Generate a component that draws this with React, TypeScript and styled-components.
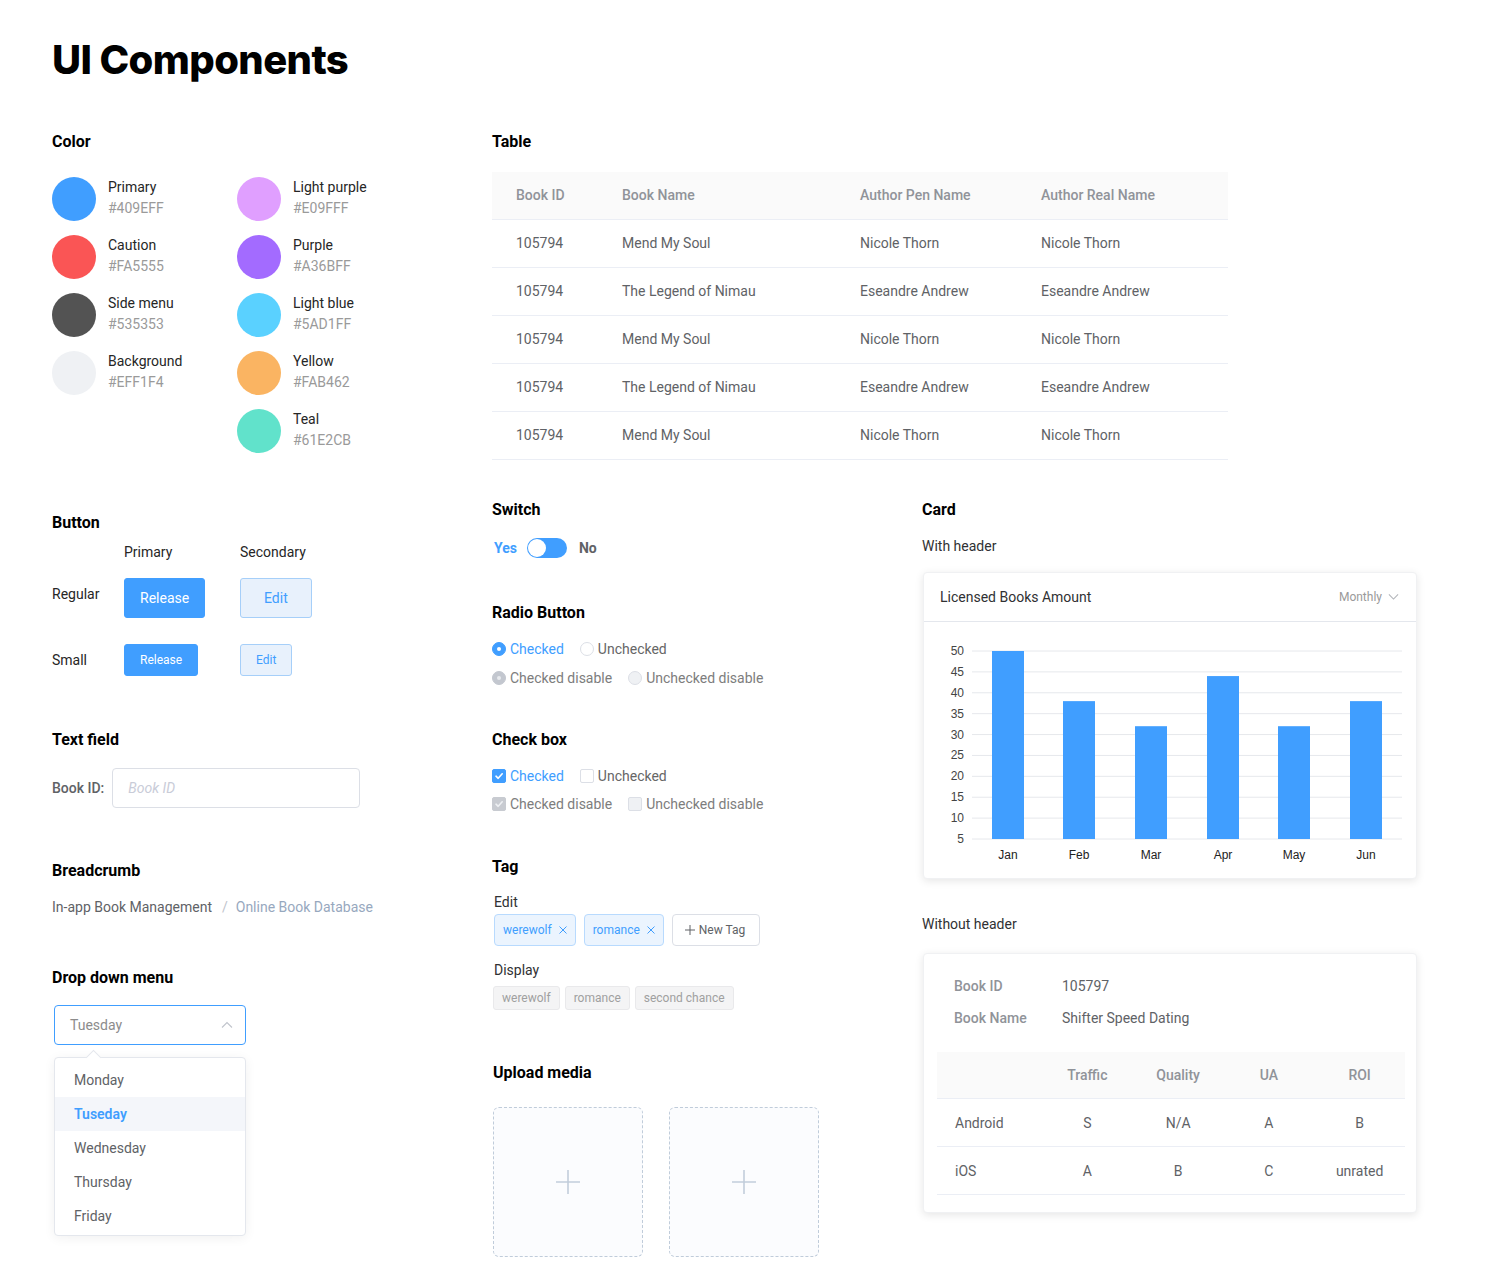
import React from "react";
import styled, { createGlobalStyle, css } from "styled-components";

const GlobalStyle = createGlobalStyle`
  html, body { margin: 0; padding: 0; background: #fff; }
  body { font-family: Roboto, "Liberation Sans", Arial, sans-serif; color: #303133; }
  * { box-sizing: border-box; }
`;

const BLUE = "#409EFF";

const Page = styled.div`
  width: 1500px;
  min-height: 1279px;
  padding: 36px 0 0 52px;
`;

const Title = styled.h1`
  margin: 0;
  font-family: Inter, "Liberation Sans", sans-serif;
  font-weight: 800;
  font-size: 40px;
  line-height: 48px;
  letter-spacing: -0.6px;
  color: #000;
`;

const Layout = styled.div`
  margin-top: 47px;
  display: grid;
  grid-template-columns: 440px 430px 495px;
  grid-template-rows: auto auto;
  row-gap: 39px;
`;

const LeftColumn = styled.div`
  grid-column: 1;
  grid-row: 1 / span 2;
  display: flex;
  flex-direction: column;
`;

const TableArea = styled.div`
  grid-column: 2 / span 2;
  grid-row: 1;
`;

const MidColumn = styled.div`
  grid-column: 2;
  grid-row: 2;
  display: flex;
  flex-direction: column;
`;

const RightColumn = styled.div`
  grid-column: 3;
  grid-row: 2;
  display: flex;
  flex-direction: column;
`;

const Section = styled.section<{ $mt?: number }>`
  margin-top: ${(p) => p.$mt ?? 0}px;
  display: flex;
  flex-direction: column;
`;

const Heading = styled.h2`
  margin: 0;
  font-size: 16px;
  line-height: 22px;
  font-weight: 700;
  color: #000;
`;

const Body = styled.div<{ $mt: number }>`
  margin-top: ${(p) => p.$mt}px;
`;

const SubLabel = styled.div<{ $mt?: number }>`
  margin-top: ${(p) => p.$mt ?? 0}px;
  font-size: 14px;
  line-height: 20px;
  color: #303133;
`;

/* ---------- Color ---------- */
const SwatchColumns = styled.div`
  display: grid;
  grid-template-columns: 185px 185px;
  align-items: start;
`;

const SwatchStack = styled.div`
  display: flex;
  flex-direction: column;
  gap: 14px;
`;

const Swatch = styled.div`
  display: flex;
  align-items: center;
  gap: 12px;
`;

const Dot = styled.span<{ $color: string }>`
  width: 44px;
  height: 44px;
  border-radius: 50%;
  background: ${(p) => p.$color};
  flex-shrink: 0;
`;

const SwatchText = styled.div`
  display: flex;
  flex-direction: column;
  font-size: 14px;
  line-height: 21px;
  margin-top: -3px;
`;

const SwatchName = styled.span`
  color: #262626;
`;

const SwatchHex = styled.span`
  color: #9a9a9a;
`;

/* ---------- Table ---------- */
const DataTable = styled.table`
  width: 736px;
  border-collapse: collapse;
  font-size: 14px;
  table-layout: fixed;
`;

const Th = styled.th`
  height: 47px;
  padding: 0 0 0 24px;
  text-align: left;
  font-weight: 500;
  color: #909399;
  background: #fafafa;
  border-bottom: 1px solid #ebeef5;
`;

const Td = styled.td`
  height: 48px;
  padding: 0 0 0 24px;
  color: #606266;
  border-bottom: 1px solid #ebeef5;
`;

/* ---------- Buttons ---------- */
const ButtonRow = styled.div<{ $mt: number }>`
  display: grid;
  grid-template-columns: 72px 116px auto;
  align-items: center;
  margin-top: ${(p) => p.$mt}px;
  font-size: 14px;
  line-height: 20px;
  color: #262626;
`;

const RowLabel = styled.span<{ $shift?: number }>`
  position: relative;
  top: ${(p) => p.$shift ?? 0}px;
`;

const Button = styled.button<{ $variant: "primary" | "secondary"; $size: "regular" | "small" }>`
  justify-self: start;
  font-family: Roboto, sans-serif;
  border-radius: 3px;
  cursor: pointer;
  ${(p) =>
    p.$size === "regular"
      ? css`
          height: 40px;
          font-size: 14px;
          padding: 0 15px;
        `
      : css`
          height: 32px;
          font-size: 12px;
          padding: 0 15px;
        `}
  ${(p) =>
    p.$variant === "primary"
      ? css`
          background: ${BLUE};
          border: 1px solid ${BLUE};
          color: #fff;
        `
      : css`
          background: #e8f1fc;
          border: 1px solid #a6cff9;
          color: ${BLUE};
        `}
  ${(p) =>
    p.$variant === "secondary" && p.$size === "regular" && css`padding: 0 23px;`}
  ${(p) =>
    p.$variant === "secondary" && p.$size === "small" && css`padding: 0 15px;`}
`;

/* ---------- Text field ---------- */
const FieldRow = styled.div`
  display: flex;
  align-items: center;
  gap: 8px;
`;

const FieldLabel = styled.label`
  font-size: 14px;
  font-weight: 500;
  color: #606266;
`;

const Input = styled.input`
  width: 248px;
  height: 40px;
  border: 1px solid #dcdfe6;
  border-radius: 4px;
  padding: 0 15px;
  font-family: Roboto, sans-serif;
  font-size: 14px;
  outline: none;
  &::placeholder {
    color: #c9ccd8;
    font-style: italic;
  }
`;

/* ---------- Breadcrumb ---------- */
const Crumbs = styled.div`
  font-size: 14px;
  line-height: 20px;
  color: #606266;
`;

const CrumbSep = styled.span`
  color: #c0c4cc;
  margin: 0 8px 0 10px;
`;

const CrumbLink = styled.span`
  color: #97a8be;
`;

/* ---------- Dropdown ---------- */
const Select = styled.div`
  width: 192px;
  height: 40px;
  margin-left: 2px;
  border: 1px solid ${BLUE};
  border-radius: 4px;
  display: flex;
  align-items: center;
  justify-content: space-between;
  padding: 0 12px 0 15px;
  font-size: 14px;
  color: #8c8c8c;
`;

const Menu = styled.ul`
  position: relative;
  width: 192px;
  margin: 12px 0 0 2px;
  padding: 5px 0 2px;
  list-style: none;
  border: 1px solid #e4e7ed;
  border-radius: 4px;
  background: #fff;
  box-shadow: 0 2px 12px rgba(0, 0, 0, 0.06);
  &::before {
    content: "";
    position: absolute;
    top: -6px;
    left: 33px;
    width: 10px;
    height: 10px;
    background: #fff;
    border-left: 1px solid #e4e7ed;
    border-top: 1px solid #e4e7ed;
    transform: rotate(45deg);
  }
`;

const MenuItem = styled.li<{ $active?: boolean }>`
  height: 34px;
  display: flex;
  align-items: center;
  padding: 0 19px;
  font-size: 14px;
  color: ${(p) => (p.$active ? BLUE : "#606266")};
  font-weight: ${(p) => (p.$active ? 600 : 400)};
  background: ${(p) => (p.$active ? "#f4f6fa" : "transparent")};
`;

/* ---------- Switch ---------- */
const SwitchRow = styled.div`
  display: flex;
  align-items: center;
  font-size: 14px;
  font-weight: 700;
  height: 20px;
`;

const SwitchText = styled.span<{ $on?: boolean }>`
  color: ${(p) => (p.$on ? BLUE : "#606266")};
  margin: ${(p) => (p.$on ? "0 10px 0 2px" : "0 0 0 12px")};
`;

const SwitchTrack = styled.span`
  position: relative;
  width: 40px;
  height: 20px;
  border-radius: 10px;
  background: ${BLUE};
`;

const SwitchKnob = styled.span`
  position: absolute;
  top: 1px;
  left: 1px;
  width: 18px;
  height: 18px;
  border-radius: 50%;
  background: #fff;
`;

/* ---------- Radio & Checkbox ---------- */
const OptionRow = styled.div<{ $mt: number }>`
  display: flex;
  align-items: center;
  gap: 16px;
  margin-top: ${(p) => p.$mt}px;
  height: 20px;
`;

const Option = styled.label<{ $tone: "active" | "normal" | "disabled" }>`
  display: flex;
  align-items: center;
  gap: 4px;
  font-size: 14px;
  color: ${(p) => (p.$tone === "active" ? BLUE : p.$tone === "disabled" ? "#7d7d7d" : "#666")};
`;

const RadioMark = styled.span<{ $checked?: boolean; $disabled?: boolean }>`
  position: relative;
  width: 14px;
  height: 14px;
  border-radius: 50%;
  flex-shrink: 0;
  ${(p) =>
    p.$checked
      ? css`
          background: ${p.$disabled ? "#c3c7cf" : BLUE};
          border: 1px solid ${p.$disabled ? "#c3c7cf" : BLUE};
          &::after {
            content: "";
            position: absolute;
            left: 50%;
            top: 50%;
            width: 4px;
            height: 4px;
            margin: -2px 0 0 -2px;
            border-radius: 50%;
            background: ${p.$disabled ? "#e8eaee" : "#fff"};
          }
        `
      : css`
          background: ${p.$disabled ? "#eff1f4" : "#fff"};
          border: 1px solid #dcdfe6;
        `}
`;

const CheckMark = styled.span<{ $checked?: boolean; $disabled?: boolean }>`
  width: 14px;
  height: 14px;
  border-radius: 2px;
  flex-shrink: 0;
  display: flex;
  align-items: center;
  justify-content: center;
  ${(p) =>
    p.$checked
      ? css`
          background: ${p.$disabled ? "#c8cbd1" : BLUE};
          border: 1px solid ${p.$disabled ? "#c8cbd1" : BLUE};
        `
      : css`
          background: ${p.$disabled ? "#eff1f4" : "#fff"};
          border: 1px solid #dcdfe6;
        `}
`;

/* ---------- Tags ---------- */
const TagRow = styled.div<{ $mt: number; $gap: number }>`
  display: flex;
  gap: ${(p) => p.$gap}px;
  margin-top: ${(p) => p.$mt}px;
`;

const EditTag = styled.span`
  height: 32px;
  display: inline-flex;
  align-items: center;
  gap: 6px;
  padding: 0 7px 0 8px;
  border: 1px solid #b8dafe;
  border-radius: 4px;
  background: #ebf4fe;
  color: ${BLUE};
  font-size: 12px;
`;

const NewTag = styled.span`
  height: 32px;
  display: inline-flex;
  align-items: center;
  gap: 4px;
  padding: 0 14px 0 12px;
  border: 1px solid #dcdfe6;
  border-radius: 4px;
  background: #fff;
  color: #606266;
  font-size: 12px;
`;

const PlainTag = styled.span`
  height: 24px;
  display: inline-flex;
  align-items: center;
  padding: 0 8px;
  border: 1px solid #e9e9eb;
  border-radius: 3px;
  background: #f4f4f5;
  color: #a0a0a0;
  font-size: 12px;
`;

/* ---------- Upload ---------- */
const UploadRow = styled.div`
  display: flex;
  gap: 26px;
  margin-left: 1px;
`;

const UploadBox = styled.div`
  width: 150px;
  height: 150px;
  border: 1px dashed #c0ccda;
  border-radius: 6px;
  background: #fbfcfe;
  display: flex;
  align-items: center;
  justify-content: center;
`;

/* ---------- Cards ---------- */
const Card = styled.div`
  width: 494px;
  margin-left: 1px;
  background: #fff;
  border-radius: 4px;
  border: 1px solid #f0f1f3;
  box-shadow: 0 2px 8px rgba(0, 0, 0, 0.1);
`;

const CardHeader = styled.div`
  height: 49px;
  display: flex;
  align-items: center;
  justify-content: space-between;
  padding: 0 17px 0 16px;
  border-bottom: 1px solid #e4e7ed;
`;

const CardTitle = styled.span`
  font-size: 14px;
  color: #303133;
`;

const Period = styled.span`
  display: flex;
  align-items: center;
  gap: 6px;
  font-size: 12px;
  color: #9a9a9a;
`;

const ChartSvg = styled.svg`
  display: block;
  font-family: "Liberation Sans", Arial, sans-serif;
`;

const CardBody = styled.div`
  padding: 22px 11px 17px 13px;
`;

const InfoGrid = styled.div`
  display: grid;
  grid-template-columns: 108px auto;
  row-gap: 12px;
  padding-left: 17px;
  font-size: 14px;
  line-height: 20px;
`;

const InfoLabel = styled.span`
  font-weight: 500;
  color: #909399;
`;

const InfoValue = styled.span`
  color: #606266;
`;

const MiniTable = styled.table`
  width: 468px;
  margin-top: 24px;
  border-collapse: collapse;
  table-layout: fixed;
  font-size: 14px;
`;

const MTh = styled.th<{ $first?: boolean }>`
  height: 47px;
  background: #fafafa;
  font-weight: 500;
  color: #909399;
  text-align: ${(p) => (p.$first ? "left" : "center")};
  padding: ${(p) => (p.$first ? "0 0 0 18px" : "0")};
  border-bottom: 1px solid #ebeef5;
`;

const MTd = styled.td<{ $first?: boolean }>`
  height: 48px;
  color: #606266;
  text-align: ${(p) => (p.$first ? "left" : "center")};
  padding: ${(p) => (p.$first ? "0 0 0 18px" : "0")};
  border-bottom: 1px solid #ebeef5;
`;

/* ---------- Icons ---------- */
const CheckIcon = ({ color }: { color: string }) => (
  <svg width="10" height="10" viewBox="0 0 10 10">
    <path d="M2 5.2 L4.2 7.3 L8.2 2.8" fill="none" stroke={color} strokeWidth="1.6" strokeLinecap="round" strokeLinejoin="round" />
  </svg>
);

const CloseIcon = () => (
  <svg width="10" height="10" viewBox="0 0 10 10">
    <path d="M1.5 1.5 L8.5 8.5 M8.5 1.5 L1.5 8.5" stroke={BLUE} strokeWidth="1" />
  </svg>
);

const PlusIcon = ({ size, color, stroke }: { size: number; color: string; stroke: number }) => (
  <svg width={size} height={size} viewBox={`0 0 ${size} ${size}`}>
    <path d={`M${size / 2} 0 V${size} M0 ${size / 2} H${size}`} stroke={color} strokeWidth={stroke} />
  </svg>
);

const Chevron = ({ up, color, w }: { up?: boolean; color: string; w: number }) => (
  <svg width={w} height={w / 2 + 2} viewBox="0 0 12 8">
    <path d={up ? "M1 6.5 L6 1.5 L11 6.5" : "M1 1.5 L6 6.5 L11 1.5"} fill="none" stroke={color} strokeWidth="1.1" />
  </svg>
);

/* ---------- Data ---------- */
const colorsLeft = [
  { name: "Primary", hex: "#409EFF" },
  { name: "Caution", hex: "#FA5555" },
  { name: "Side menu", hex: "#535353" },
  { name: "Background", hex: "#EFF1F4" },
];
const colorsRight = [
  { name: "Light purple", hex: "#E09FFF" },
  { name: "Purple", hex: "#A36BFF" },
  { name: "Light blue", hex: "#5AD1FF" },
  { name: "Yellow", hex: "#FAB462" },
  { name: "Teal", hex: "#61E2CB" },
];

const books = [
  ["105794", "Mend My Soul", "Nicole Thorn", "Nicole Thorn"],
  ["105794", "The Legend of Nimau", "Eseandre Andrew", "Eseandre Andrew"],
  ["105794", "Mend My Soul", "Nicole Thorn", "Nicole Thorn"],
  ["105794", "The Legend of Nimau", "Eseandre Andrew", "Eseandre Andrew"],
  ["105794", "Mend My Soul", "Nicole Thorn", "Nicole Thorn"],
];

const days = ["Monday", "Tuseday", "Wednesday", "Thursday", "Friday"];

const chartData = [
  { m: "Jan", v: 50 },
  { m: "Feb", v: 38 },
  { m: "Mar", v: 32 },
  { m: "Apr", v: 44 },
  { m: "May", v: 32 },
  { m: "Jun", v: 38 },
];
const barCenters = [84, 155, 227, 299, 370, 442];
const yOf = (v: number) => 217 - ((v - 5) * 188) / 45;
const ticks = [50, 45, 40, 35, 30, 25, 20, 15, 10, 5];

const ColorList = ({ items }: { items: { name: string; hex: string }[] }) => (
  <SwatchStack>
    {items.map((c) => (
      <Swatch key={c.name}>
        <Dot $color={c.hex} />
        <SwatchText>
          <SwatchName>{c.name}</SwatchName>
          <SwatchHex>{c.hex}</SwatchHex>
        </SwatchText>
      </Swatch>
    ))}
  </SwatchStack>
);

const BarChart = () => (
  <ChartSvg width="492" height="256" viewBox="0 0 492 256">
    {ticks.map((t) => (
      <g key={t}>
        <line x1="48" x2="478" y1={yOf(t)} y2={yOf(t)} stroke="#e6e8ec" strokeWidth="1" />
        <text x="40" y={yOf(t) + 4} textAnchor="end" fontSize="12" fill="#444">
          {t}
        </text>
      </g>
    ))}
    {chartData.map((d, i) => (
      <g key={d.m}>
        <rect x={barCenters[i] - 16} y={yOf(d.v)} width="32" height={217 - yOf(d.v)} fill={BLUE} />
        <text x={barCenters[i]} y="237" textAnchor="middle" fontSize="12" fill="#222">
          {d.m}
        </text>
      </g>
    ))}
  </ChartSvg>
);

export default function App() {
  return (
    <Page>
      <GlobalStyle />
      <Title>UI Components</Title>
      <Layout>
        <LeftColumn>
          <Section>
            <Heading>Color</Heading>
            <Body $mt={24}>
              <SwatchColumns>
                <ColorList items={colorsLeft} />
                <ColorList items={colorsRight} />
              </SwatchColumns>
            </Body>
          </Section>

          <Section $mt={59}>
            <Heading>Button</Heading>
            <ButtonRow $mt={8}>
              <span />
              <span>Primary</span>
              <span>Secondary</span>
            </ButtonRow>
            <ButtonRow $mt={16}>
              <RowLabel $shift={-4}>Regular</RowLabel>
              <Button $variant="primary" $size="regular">Release</Button>
              <Button $variant="secondary" $size="regular">Edit</Button>
            </ButtonRow>
            <ButtonRow $mt={26}>
              <RowLabel>Small</RowLabel>
              <Button $variant="primary" $size="small">Release</Button>
              <Button $variant="secondary" $size="small">Edit</Button>
            </ButtonRow>
          </Section>

          <Section $mt={53}>
            <Heading>Text field</Heading>
            <Body $mt={17}>
              <FieldRow>
                <FieldLabel>Book ID:</FieldLabel>
                <Input placeholder="Book ID" />
              </FieldRow>
            </Body>
          </Section>

          <Section $mt={52}>
            <Heading>Breadcrumb</Heading>
            <Body $mt={15}>
              <Crumbs>
                In-app Book Management
                <CrumbSep>/</CrumbSep>
                <CrumbLink>Online Book Database</CrumbLink>
              </Crumbs>
            </Body>
          </Section>

          <Section $mt={50}>
            <Heading>Drop down menu</Heading>
            <Body $mt={16}>
              <Select>
                <span>Tuesday</span>
                <Chevron up color="#c0c4cc" w={12} />
              </Select>
              <Menu>
                {days.map((d) => (
                  <MenuItem key={d} $active={d === "Tuseday"}>
                    {d}
                  </MenuItem>
                ))}
              </Menu>
            </Body>
          </Section>
        </LeftColumn>

        <TableArea>
          <Section>
            <Heading>Table</Heading>
            <Body $mt={19}>
              <DataTable>
                <colgroup>
                  <col style={{ width: 106 }} />
                  <col style={{ width: 238 }} />
                  <col style={{ width: 181 }} />
                  <col style={{ width: 211 }} />
                </colgroup>
                <thead>
                  <tr>
                    <Th>Book ID</Th>
                    <Th>Book Name</Th>
                    <Th>Author Pen Name</Th>
                    <Th>Author Real Name</Th>
                  </tr>
                </thead>
                <tbody>
                  {books.map((r, i) => (
                    <tr key={i}>
                      {r.map((c, j) => (
                        <Td key={j}>{c}</Td>
                      ))}
                    </tr>
                  ))}
                </tbody>
              </DataTable>
            </Body>
          </Section>
        </TableArea>

        <MidColumn>
          <Section>
            <Heading>Switch</Heading>
            <Body $mt={17}>
              <SwitchRow>
                <SwitchText $on>Yes</SwitchText>
                <SwitchTrack>
                  <SwitchKnob />
                </SwitchTrack>
                <SwitchText>No</SwitchText>
              </SwitchRow>
            </Body>
          </Section>

          <Section $mt={44}>
            <Heading>Radio Button</Heading>
            <OptionRow $mt={15}>
              <Option $tone="active">
                <RadioMark $checked />
                Checked
              </Option>
              <Option $tone="normal">
                <RadioMark />
                Unchecked
              </Option>
            </OptionRow>
            <OptionRow $mt={9}>
              <Option $tone="disabled">
                <RadioMark $checked $disabled />
                Checked disable
              </Option>
              <Option $tone="disabled">
                <RadioMark $disabled />
                Unchecked disable
              </Option>
            </OptionRow>
          </Section>

          <Section $mt={41}>
            <Heading>Check box</Heading>
            <OptionRow $mt={15}>
              <Option $tone="active">
                <CheckMark $checked>
                  <CheckIcon color="#fff" />
                </CheckMark>
                Checked
              </Option>
              <Option $tone="normal">
                <CheckMark />
                Unchecked
              </Option>
            </OptionRow>
            <OptionRow $mt={8}>
              <Option $tone="disabled">
                <CheckMark $checked $disabled>
                  <CheckIcon color="#eef0f3" />
                </CheckMark>
                Checked disable
              </Option>
              <Option $tone="disabled">
                <CheckMark $disabled />
                Unchecked disable
              </Option>
            </OptionRow>
          </Section>

          <Section $mt={42}>
            <Heading>Tag</Heading>
            <SubLabel $mt={14} style={{ paddingLeft: 2 }}>Edit</SubLabel>
            <TagRow $mt={2} $gap={8}>
              <EditTag style={{ marginLeft: 2 }}>
                werewolf
                <CloseIcon />
              </EditTag>
              <EditTag>
                romance
                <CloseIcon />
              </EditTag>
              <NewTag>
                <PlusIcon size={10} color="#606266" stroke={1} />
                New Tag
              </NewTag>
            </TagRow>
            <SubLabel $mt={14} style={{ paddingLeft: 2 }}>Display</SubLabel>
            <TagRow $mt={6} $gap={5}>
              <PlainTag style={{ marginLeft: 1 }}>werewolf</PlainTag>
              <PlainTag>romance</PlainTag>
              <PlainTag>second chance</PlainTag>
            </TagRow>
          </Section>

          <Section $mt={52}>
            <Heading style={{ paddingLeft: 1 }}>Upload media</Heading>
            <Body $mt={23}>
              <UploadRow>
                <UploadBox>
                  <PlusIcon size={24} color="#c2cddb" stroke={1.6} />
                </UploadBox>
                <UploadBox>
                  <PlusIcon size={24} color="#c2cddb" stroke={1.6} />
                </UploadBox>
              </UploadRow>
            </Body>
          </Section>
        </MidColumn>

        <RightColumn>
          <Section>
            <Heading>Card</Heading>
            <SubLabel $mt={15}>With header</SubLabel>
            <Body $mt={16}>
              <Card>
                <CardHeader>
                  <CardTitle>Licensed Books Amount</CardTitle>
                  <Period>
                    Monthly
                    <Chevron color="#b0b3b8" w={11} />
                  </Period>
                </CardHeader>
                <BarChart />
              </Card>
            </Body>
            <SubLabel $mt={35}>Without header</SubLabel>
            <Body $mt={19}>
              <Card>
                <CardBody>
                  <InfoGrid>
                    <InfoLabel>Book ID</InfoLabel>
                    <InfoValue>105797</InfoValue>
                    <InfoLabel>Book Name</InfoLabel>
                    <InfoValue>Shifter Speed Dating</InfoValue>
                  </InfoGrid>
                  <MiniTable>
                    <colgroup>
                      <col style={{ width: 105 }} />
                      <col />
                      <col />
                      <col />
                      <col />
                    </colgroup>
                    <thead>
                      <tr>
                        <MTh $first />
                        <MTh>Traffic</MTh>
                        <MTh>Quality</MTh>
                        <MTh>UA</MTh>
                        <MTh>ROI</MTh>
                      </tr>
                    </thead>
                    <tbody>
                      <tr>
                        <MTd $first>Android</MTd>
                        <MTd>S</MTd>
                        <MTd>N/A</MTd>
                        <MTd>A</MTd>
                        <MTd>B</MTd>
                      </tr>
                      <tr>
                        <MTd $first>iOS</MTd>
                        <MTd>A</MTd>
                        <MTd>B</MTd>
                        <MTd>C</MTd>
                        <MTd>unrated</MTd>
                      </tr>
                    </tbody>
                  </MiniTable>
                </CardBody>
              </Card>
            </Body>
          </Section>
        </RightColumn>
      </Layout>
    </Page>
  );
}
